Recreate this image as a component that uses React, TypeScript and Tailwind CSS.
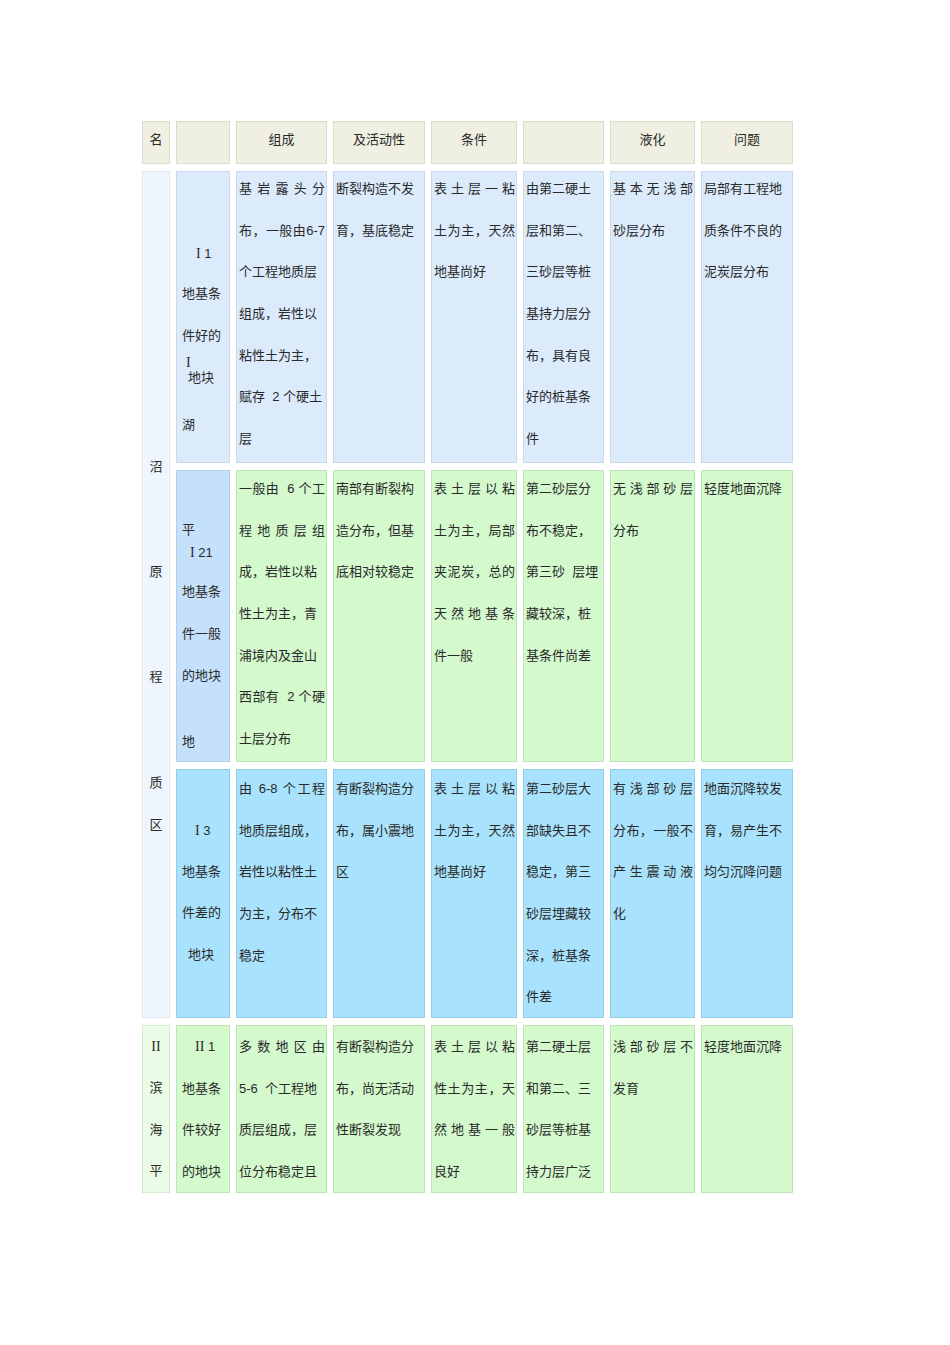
import clsx from "clsx";

type L = string | { t: React.ReactNode; j?: boolean; c?: string };

const J = (t: string): L => ({ t, j: true });

const HEAD = "bg-[#efefe2] border-[#dcdccc]";
const BLUE = "bg-[#dcebfc] border-[#c9d9eb]";
const BLUE2 = "bg-[#c5e0fb] border-[#b3cee9]";
const GREEN = "bg-[#d3f9cd] border-[#bde5b7]";
const SKY = "bg-[#a9e2fc] border-[#93cde8]";

// roman numeral, drawn in a serif face like the scanned original
function R({ n }: { n: string }) {
  return <span className="font-['Liberation_Serif',serif] text-[14px]">{n}</span>;
}

// one cell of text lines, spaced like the scanned table (~41.7px per line)
function Cell({ lines, tone, pt }: { lines: L[]; tone: string; pt: string }) {
  return (
    <div className={clsx("border flex flex-col gap-[21.67px] pl-[2px] pr-[1px]", tone, pt)}>
      {lines.map((l, i) => {
        const o = typeof l === "string" ? { t: l } : l;
        return (
          <div
            key={i}
            className={clsx(
              "h-[20px] leading-[20px] whitespace-pre",
              o.j && "text-justify [text-align-last:justify]",
              o.c
            )}
          >
            {o.t}
          </div>
        );
      })}
    </div>
  );
}

function Head({ text }: { text?: string }) {
  return (
    <div className={clsx("border flex items-center justify-center pb-[5px]", HEAD)}>
      {text}
    </div>
  );
}

export default function App() {
  return (
    <div
      className="min-h-[1345px] w-[950px] bg-white pt-[121px] pl-[142px] text-[13px] text-[#2a2a2a]"
      style={{ fontFamily: '"Liberation Sans", "Noto Sans CJK SC", sans-serif' }}
    >
      <div className="grid grid-cols-[28px_54px_91px_92px_86px_81px_85px_92px] grid-rows-[43px_292px_292px_249px_168px] gap-x-[6px] gap-y-[7px]">
        {/* header */}
        <Head text="名" />
        <Head />
        <Head text="组成" />
        <Head text="及活动性" />
        <Head text="条件" />
        <Head />
        <Head text="液化" />
        <Head text="问题" />

        {/* merged zone column */}
        <div className="row-span-3 border border-[#dfe7f0] bg-[#eef5fd] flex flex-col items-center">
          <div className="h-[20px] leading-[20px] mt-[285px]">沼</div>
          <div className="h-[20px] leading-[20px] mt-[85px]">原</div>
          <div className="h-[20px] leading-[20px] mt-[85px]">程</div>
          <div className="h-[20px] leading-[20px] mt-[86px]">质</div>
          <div className="h-[20px] leading-[20px] mt-[22px]">区</div>
        </div>

        {/* row I1 */}
        <div className={clsx("border flex flex-col", BLUE)}>
          <div className="h-[20px] leading-[20px] mt-[72px] pl-[19px]">
            <R n="I" /> 1
          </div>
          <div className="h-[20px] leading-[20px] mt-[20px] pl-[5px]">地基条</div>
          <div className="h-[20px] leading-[20px] mt-[22px] pl-[5px]">件好的</div>
          <div className="h-[20px] leading-[20px] mt-[7px] pl-[9px]">
            <R n="I" />
          </div>
          <div className="h-[20px] leading-[20px] mt-[-5px] pl-[11px]">地块</div>
          <div className="h-[20px] leading-[20px] mt-[27px] pl-[5px]">湖</div>
        </div>
        <Cell
          tone={BLUE}
          pt="pt-[7px]"
          lines={[J("基 岩 露 头 分"), J("布，一般由6-7"), "个工程地质层", "组成，岩性以", "粘性土为主，", "赋存  2 个硬土", "层"]}
        />
        <Cell tone={BLUE} pt="pt-[7px]" lines={["断裂构造不发", "育，基底稳定"]} />
        <Cell tone={BLUE} pt="pt-[7px]" lines={[J("表 土 层 一 粘"), J("土为主，天然"), "地基尚好"]} />
        <Cell
          tone={BLUE}
          pt="pt-[7px]"
          lines={["由第二硬土", "层和第二、", "三砂层等桩", "基持力层分", "布，具有良", "好的桩基条", "件"]}
        />
        <Cell tone={BLUE} pt="pt-[7px]" lines={[J("基 本 无 浅 部"), "砂层分布"]} />
        <Cell tone={BLUE} pt="pt-[7px]" lines={["局部有工程地", "质条件不良的", "泥炭层分布"]} />

        {/* row I21 */}
        <div className={clsx("border flex flex-col", BLUE2)}>
          <div className="h-[20px] leading-[20px] mt-[49px] pl-[5px]">平</div>
          <div className="h-[20px] leading-[20px] mt-[3px] pl-[13px]">
            <R n="I" /> 21
          </div>
          <div className="h-[20px] leading-[20px] mt-[19px] pl-[5px]">地基条</div>
          <div className="h-[20px] leading-[20px] mt-[22px] pl-[5px]">件一般</div>
          <div className="h-[20px] leading-[20px] mt-[22px] pl-[5px]">的地块</div>
          <div className="h-[20px] leading-[20px] mt-[46px] pl-[5px]">地</div>
        </div>
        <Cell
          tone={GREEN}
          pt="pt-[8px]"
          lines={[J("一般由  6 个工"), J("程 地 质 层 组"), "成，岩性以粘", "性土为主，青", "浦境内及金山", J("西部有  2 个硬"), "土层分布"]}
        />
        <Cell tone={GREEN} pt="pt-[8px]" lines={["南部有断裂构", "造分布，但基", "底相对较稳定"]} />
        <Cell
          tone={GREEN}
          pt="pt-[8px]"
          lines={[J("表 土 层 以 粘"), J("土为主，局部"), J("夹泥炭，总的"), J("天 然 地 基 条"), "件一般"]}
        />
        <Cell
          tone={GREEN}
          pt="pt-[8px]"
          lines={["第二砂层分", "布不稳定，", "第三砂  层埋", "藏较深，桩", "基条件尚差"]}
        />
        <Cell tone={GREEN} pt="pt-[8px]" lines={[J("无 浅 部 砂 层"), "分布"]} />
        <Cell tone={GREEN} pt="pt-[8px]" lines={["轻度地面沉降"]} />

        {/* row I3 */}
        <div className={clsx("border flex flex-col", SKY)}>
          <div className="h-[20px] leading-[20px] mt-[51px] pl-[18px]">
            <R n="I" /> 3
          </div>
          <div className="h-[20px] leading-[20px] mt-[21px] pl-[5px]">地基条</div>
          <div className="h-[20px] leading-[20px] mt-[21px] pl-[5px]">件差的</div>
          <div className="h-[20px] leading-[20px] mt-[22px] pl-[11px]">地块</div>
        </div>
        <Cell
          tone={SKY}
          pt="pt-[9px]"
          lines={[J("由 6-8 个工程"), "地质层组成，", "岩性以粘性土", "为主，分布不", "稳定"]}
        />
        <Cell tone={SKY} pt="pt-[9px]" lines={["有断裂构造分", "布，属小震地", "区"]} />
        <Cell tone={SKY} pt="pt-[9px]" lines={[J("表 土 层 以 粘"), J("土为主，天然"), "地基尚好"]} />
        <Cell
          tone={SKY}
          pt="pt-[9px]"
          lines={["第二砂层大", "部缺失且不", "稳定，第三", "砂层埋藏较", "深，桩基条", "件差"]}
        />
        <Cell
          tone={SKY}
          pt="pt-[9px]"
          lines={[J("有 浅 部 砂 层"), J("分布，一般不"), J("产 生 震 动 液"), "化"]}
        />
        <Cell tone={SKY} pt="pt-[9px]" lines={["地面沉降较发", "育，易产生不", "均匀沉降问题"]} />

        {/* row II1 */}
        <div className="border border-[#d5ecd1] bg-[#eafbe6] pt-[11px] flex flex-col items-center gap-[21.3px]">
          <div className="h-[20px] leading-[20px]">
            <R n="II" />
          </div>
          <div className="h-[20px] leading-[20px]">滨</div>
          <div className="h-[20px] leading-[20px]">海</div>
          <div className="h-[20px] leading-[20px]">平</div>
        </div>
        <Cell
          tone={GREEN}
          pt="pt-[11px]"
          lines={[
            { t: <><R n="II" /> 1</>, c: "pl-[16px]" },
            { t: "地基条", c: "pl-[3px]" },
            { t: "件较好", c: "pl-[3px]" },
            { t: "的地块", c: "pl-[3px]" },
          ]}
        />
        <Cell
          tone={GREEN}
          pt="pt-[11px]"
          lines={[J("多 数 地 区 由"), "5-6  个工程地", "质层组成，层", "位分布稳定且"]}
        />
        <Cell tone={GREEN} pt="pt-[11px]" lines={["有断裂构造分", "布，尚无活动", "性断裂发现"]} />
        <Cell
          tone={GREEN}
          pt="pt-[11px]"
          lines={[J("表 土 层 以 粘"), J("性土为主，天"), J("然 地 基 一 般"), "良好"]}
        />
        <Cell tone={GREEN} pt="pt-[11px]" lines={["第二硬土层", "和第二、三", "砂层等桩基", "持力层广泛"]} />
        <Cell tone={GREEN} pt="pt-[11px]" lines={[J("浅 部 砂 层 不"), "发育"]} />
        <Cell tone={GREEN} pt="pt-[11px]" lines={["轻度地面沉降"]} />
      </div>
    </div>
  );
}
